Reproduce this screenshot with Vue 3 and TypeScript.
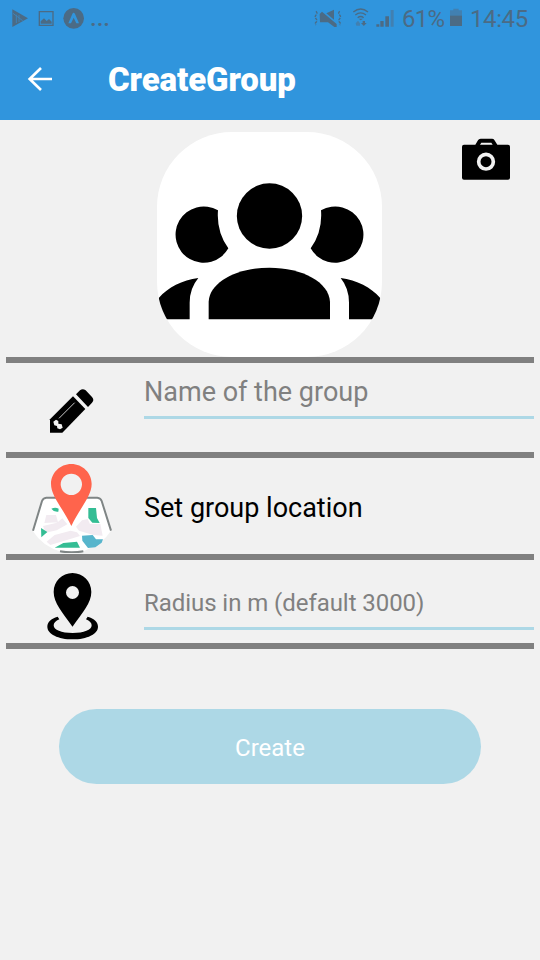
<script setup lang="ts">
import { ref } from 'vue'

const groupName = ref('')
const radius = ref('')
</script>

<template>
  <div class="screen">
    <header class="header">
      <div class="status">
        <svg width="61" height="40" viewBox="0 0 183 120">
          <path d="M37 28 L84 55 L37 81Z" />
          <path class="seam" d="M49 44 V69 M57 45 V66 M39 40 L68 62" />
          <path d="M116 33 H161 V78 H116Z M120 37 V74 H157 V37Z" fill-rule="evenodd" />
          <path d="M122 71 V64 L132 55 L140 63 L147 57 L155 65 V71Z" />
        </svg>
        <svg width="26" height="40" viewBox="183 0 78 120">
          <circle cx="221" cy="55" r="31" />
          <path class="chevron" d="M205 70 L217 42 Q221 35 225 42 L237 70 L229 70 L221 53 L213 70Z" />
        </svg>
        <span class="dots">...</span>
        <span class="spacer"></span>
        <svg width="86" height="40" viewBox="36 0 258 120">
          <path d="M59 42 L66 35 L110 72 V81 L103 81 L84 67 H60Z M79 40 L102 29 V59Z" />
          <path class="wave" d="M48 34 q6 6 0 11 q-5 5 0 11 q5 5 0 11 q-4 4 0 8 M119 34 q-6 6 0 11 q5 5 0 11 q-5 5 0 11 q4 4 0 8" />
          <path class="wifi" d="M160 36 Q182 18 204 36 M166 45 Q182 32 198 45 M173 53 Q182 46 191 53" />
          <path d="M176 56 H189 L182 61Z M188 63 H195 V69 H200 L191.500 78 L183 69 H188Z" />
          <path class="faint" d="M167 70 L174 62 L180 70 V77 H169Z M272 30 H281 V80 H272Z" />
          <path d="M229 73 H238 V80 H229Z M241 63 H251 V80 H241Z M256 49 H267 V80 H256Z" />
        </svg>
        <span class="battery-text">61%</span>
        <svg width="14" height="40" viewBox="447 0 42 120">
          <path class="faint" d="M460 26 H476 V31 H486 V48 H450 V31 H460Z" />
          <path d="M450 47 H486 V78 H450Z" />
        </svg>
        <span class="clock">14:45</span>
      </div>
      <nav class="nav">
        <svg class="back" width="30" height="30" viewBox="75 72 90 90">
          <path d="M156 117 H90 M123 84 L89 117 L123 150" />
        </svg>
        <h1 class="title">CreateGroup</h1>
      </nav>
    </header>

    <main class="content">
      <section class="picture">
        <svg class="avatar" width="225" height="225" viewBox="36 36 675 675">
          <circle cx="373.5" cy="288" r="98" />
          <path d="M191 598 V545 C194 486 275 443 373.5 443 C472 443 552 486 555 545 V598Z" />
          <path d="M219 271 A84.5 84.5 0 1 0 250 385 Q214 335 219 271Z" />
          <path d="M528 271 A84.5 84.5 0 1 1 497 385 Q533 335 528 271Z" />
          <path d="M160 474 C112 480 68 503 42 533 L30 598 H134 V548 Q134 505 160 474Z" />
          <path d="M587 474 C635 480 679 503 705 533 L717 598 H612 V548 Q612 505 587 474Z" />
        </svg>
        <svg class="camera" width="48" height="42" viewBox="36 40 144 126">
          <path fill-rule="evenodd" d="M42 60 H76 L84 47 Q86 42 92 42 H126 Q131 42 133 46 L142 60 H174 Q180 60 180 66 V159 Q180 165 174 165 H42 Q36 165 36 159 V66 Q36 60 42 60Z M90 60 H128 L124 54 H94Z" />
          <circle class="lens" cx="108" cy="111" r="22" />
        </svg>
      </section>

      <section class="row row-name">
        <div class="icon">
          <svg width="48" height="48" viewBox="144 111 144 144">
            <path d="M150 208 L219 139 L256 177 L187 248 H150Z" />
            <path d="M228 133 L240 121 Q248 114 257 121 L276 141 Q284 150 276 158 L264 171Z" />
            <path class="cut" d="M160 215 L168 209 L175 213 V221 L185 223 L188 233 L180 238 L172 235 L171 228 L163 226Z" />
            <path class="shine" d="M177 205 L224 158" />
          </svg>
        </div>
        <div class="field">
          <input v-model="groupName" class="input" type="text" placeholder="Name of the group" />
        </div>
      </section>

      <section class="row row-location">
        <div class="icon">
          <svg width="84" height="91" viewBox="90 36 252 273">
            <path class="paper" d="M137 143 H296 Q303 144 306 152 L332 244 Q310 278 266 296 L245 307 H187 Q127 290 99 244 L126 152 Q129 144 137 143Z" />
            <path class="edge" d="M99 242 L126 153 Q129 144 139 143 H292 Q302 144 305 153 L333 242 M180 304 Q215 310 250 304" />
            <path class="block" d="M139 195 H168 L174 217 L133 219Z M129 228 L171 218 L187 205 L202 223 L170 241 L137 248Z M140 275 L164 255 L212 242 L231 247 L240 258 L181 276 L151 285Z M246 211 L263 207 L270 222 H301 L308 257 L280 255 L237 242 L228 230Z" />
            <path class="green" d="M154 176 Q166 171 176 176 L175 185 Q162 187 154 176Z M265 174 H288 L291 204 L299 219 L277 218 L265 204Z M123 234 L142 246 L124 262Z M164 293 L190 279 L231 275 L240 293Z" />
            <path class="water" d="M246 257 L278 255 L288 268 L309 268 L305 278 L286 292 L264 294 L247 272Z" />
            <path class="pin" fill-rule="evenodd" d="M214 42 C180 42 153 69 153 102 C153 139 191 178 214 228 C237 178 275 139 275 102 C275 69 248 42 214 42Z M214 71 A32 32 0 1 1 214 135 A32 32 0 1 1 214 71Z" />
          </svg>
        </div>
        <div class="label">Set group location</div>
      </section>

      <section class="row row-radius">
        <div class="icon">
          <svg width="54" height="70" viewBox="135 63 162 210">
            <path fill-rule="evenodd" d="M217.500 69 C186 69 161 94 161 126 C161 158 187 187 217.500 230 C248 187 274 158 274 126 C274 94 249 69 217.500 69Z M217.500 108 A19.500 19.500 0 1 1 217.500 147 A19.500 19.500 0 1 1 217.500 108Z" />
            <path d="M173 200 C153 206 142 216 142 230 C142 252 175 268 218 268 C261 268 294 252 294 230 C294 216 283 206 263 200 L258 208 C269 213 275 219 275 226 C275 240 252 249 218 249 C184 249 161 240 161 226 C161 219 167 213 178 208Z" />
          </svg>
        </div>
        <div class="field">
          <input v-model="radius" class="input" type="text" placeholder="Radius in m (default 3000)" />
        </div>
      </section>

      <button class="create" type="button">Create</button>
    </main>
  </div>
</template>

<style>
body {
  background: #f1f1f1;
}
</style>

<style scoped>
.screen {
  width: 540px;
  height: 960px;
  overflow: hidden;
  background: #f1f1f1;
  font-family: Roboto, "Liberation Sans", sans-serif;
}
svg {
  display: block;
  flex: none;
}
.header {
  height: 120px;
  background: #3095dd;
}
.status {
  display: flex;
  align-items: flex-start;
  height: 40px;
  box-sizing: border-box;
  padding-right: 12px;
  color: #4b6b85;
  fill: #4b6b85;
  font-size: 24px;
  line-height: 39px;
}
.seam {
  fill: none;
  stroke: #3d83b8;
  stroke-width: 3;
}
.chevron {
  fill: #3095dd;
}
.dots {
  margin-left: 3px;
  font-weight: 500;
  line-height: 36px;
}
.spacer {
  flex: 1;
}
.wave,
.wifi {
  fill: none;
  stroke: #4b6b85;
  stroke-width: 4;
}
.wave {
  stroke-dasharray: 8 3;
}
.faint {
  fill: #4180b1;
}
.battery-text {
  width: 47px;
  margin-left: 4px;
  letter-spacing: -0.8px;
}
.clock {
  width: 58px;
  margin-left: 7px;
  letter-spacing: -0.4px;
}
.nav {
  display: flex;
  align-items: center;
  height: 78px;
  padding-left: 25px;
}
.back {
  fill: none;
  stroke: #fff;
  stroke-width: 8;
}
.title {
  margin: 2px 0 0 53px;
  color: #fff;
  font-size: 33px;
  font-weight: 900;
  letter-spacing: -0.1px;
  line-height: 40px;
}
.content {
  display: flex;
  flex-direction: column;
  padding: 0 6px;
}
.picture {
  display: grid;
  grid-template-columns: 151px 225px 1fr;
  height: 225px;
  padding-top: 12px;
  border-bottom: 6px solid #808080;
}
.avatar {
  grid-column: 2;
  border-radius: 75px;
  background: #fff;
}
.camera {
  justify-self: end;
  margin: 6px 24px 0 0;
}
.lens {
  fill: #000;
  stroke: #f1f1f1;
  stroke-width: 11;
}
.row {
  display: flex;
  border-bottom: 6px solid #808080;
}
.row-name {
  height: 89px;
}
.row-location {
  height: 96px;
}
.row-radius {
  height: 83px;
}
.icon {
  display: flex;
  flex: none;
  justify-content: center;
  align-items: flex-start;
  width: 132px;
  margin-right: 6px;
}
.row-name .icon {
  padding-top: 24px;
}
.row-location .icon {
  padding-top: 4px;
}
.row-radius .icon {
  padding-top: 11px;
}
.cut {
  fill: #f1f1f1;
}
.shine {
  fill: none;
  stroke: #c8c8c8;
  stroke-width: 3;
}
.paper {
  fill: #fff;
}
.edge {
  fill: none;
  stroke: #7f8585;
  stroke-width: 6;
}
.block {
  fill: #f2ebf1;
}
.green {
  fill: #34bd94;
}
.water {
  fill: #57b5cc;
}
.pin {
  fill: #ff644c;
}
.field {
  flex: 1;
  box-sizing: border-box;
  border-bottom: 3px solid #add8e6;
}
.row-name .field {
  height: 56px;
}
.row-radius .field {
  height: 70px;
}
.input {
  display: block;
  width: 100%;
  box-sizing: border-box;
  padding: 0;
  border: 0;
  outline: 0;
  background: transparent;
  color: #000;
  font-family: inherit;
}
.input::placeholder {
  color: #808080;
  opacity: 1;
}
.row-name .input {
  height: 58px;
  font-size: 27px;
}
.row-radius .input {
  height: 86px;
  font-size: 24px;
  letter-spacing: -0.06px;
}
.label {
  color: #000;
  font-size: 27px;
  line-height: 101px;
}
.create {
  align-self: center;
  width: 422px;
  height: 75px;
  margin-top: 60px;
  padding: 3px 0 0;
  border: 0;
  border-radius: 38px;
  background: #add8e6;
  color: #fff;
  font-family: inherit;
  font-size: 24px;
}
</style>
